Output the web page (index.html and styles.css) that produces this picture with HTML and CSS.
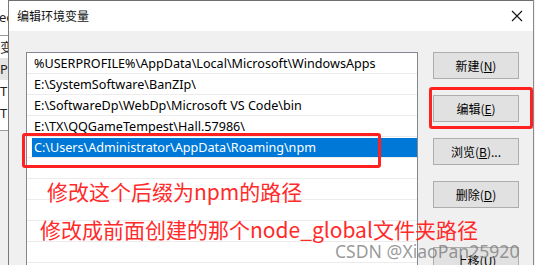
FILE: index.html
```html
<!DOCTYPE html>
<html lang="zh-CN">
<head>
<meta charset="utf-8">
<title>编辑环境变量</title>
<link rel="stylesheet" href="styles.css">
</head>
<body>
<div class="screen">
  <div class="behind">
    <div class="behind-top">ee</div>
    <div class="behind-row">变</div>
    <div class="behind-row sel">Pa</div>
    <div class="behind-row">TE</div>
    <div class="behind-row">TM</div>
    <div class="behind-bottom"></div>
  </div>
  <div class="dialog">
    <div class="titlebar">
      <span class="title">编辑环境变量</span>
      <svg class="close" width="12" height="12" viewBox="0 0 12 12"><path d="M1 1L11 11M11 1L1 11" stroke="#111" stroke-width="1.1" fill="none"/></svg>
    </div>
    <div class="content">
      <div class="listbox">
        <div class="row">%USERPROFILE%\AppData\Local\Microsoft\WindowsApps</div>
        <div class="row">E:\SystemSoftware\BanZIp\</div>
        <div class="row">E:\SoftwareDp\WebDp\Microsoft VS Code\bin</div>
        <div class="row">E:\TX\QQGameTempest\Hall.57986\</div>
        <div class="row editing"><span class="edit">C:\Users\Administrator\AppData\Roaming\npm</span></div>
        <div class="row"></div>
        <div class="row"></div>
        <div class="row"></div>
        <div class="row"></div>
        <div class="row"></div>
      </div>
      <div class="buttons">
        <div class="btn">新建(<u>N</u>)</div>
        <div class="btn">编辑(<u>E</u>)</div>
        <div class="btn">浏览(<u>B</u>)...</div>
        <div class="btn">删除(<u>D</u>)</div>
        <div class="btn gap">上移(<u>U</u>)</div>
      </div>
    </div>
  </div>
  <div class="edge"></div>

  <div class="mark mark-row"></div>
  <div class="mark mark-btn"></div>
  <div class="note note1">修改这个后缀为npm的路径</div>
  <div class="note note2">修改成前面创建的那个node_global文件夹路径</div>
  <div class="watermark">CSDN @XiaoPan25920</div>
</div>
</body>
</html>
```
FILE: styles.css
```css
html, body {
  margin: 0;
  padding: 0;
}
body {
  width: 535px;
  height: 265px;
  overflow: hidden;
  background: #f0f0f0;
  font-family: "Noto Sans", "Noto Sans CJK SC", sans-serif;
}
.screen {
  position: relative;
  display: flex;
  width: 535px;
  height: 265px;
  overflow: hidden;
}
.behind {
  width: 8px;
  flex: none;
  display: flex;
  flex-direction: column;
  overflow: hidden;
  background: #fff;
  font-size: 13px;
  color: #222;
  white-space: nowrap;
}
.behind-top {
  height: 35px;
  line-height: 34px;
  border-bottom: 1px solid #9a9a9a;
  text-indent: -1px;
}
.behind-row {
  height: 22px;
  line-height: 22px;
}
.behind-row.sel {
  background: #e5e5e5;
}
.behind-bottom {
  margin-top: 6px;
  border-top: 1px solid #9a9a9a;
  flex: 1;
  background: #f0f0f0;
}
.dialog {
  width: 525px;
  flex: none;
  display: flex;
  flex-direction: column;
  border-left: 1px solid #7a7a7a;
  border-top: 1px solid #6f6f6f;
  box-sizing: border-box;
  background: #f0f0f0;
}
.titlebar {
  height: 30px;
  flex: none;
  background: #fff;
  display: flex;
  align-items: center;
  justify-content: space-between;
  padding: 0 10px 0 8px;
}
.title {
  font-family: "Noto Sans CJK SC", sans-serif;
  font-size: 12px;
  color: #111;
  margin-top: -1px;
}
.close {
  display: block;
  margin-top: -1px;
}
.content {
  display: flex;
  padding: 21px 0 0 17px;
  gap: 15px;
}
.listbox {
  width: 392px;
  height: 240px;
  flex: none;
  background: #fff;
  border: 1px solid #828790;
  box-sizing: border-box;
}
.row {
  height: 21px;
  box-sizing: border-box;
  border-bottom: 1px solid #ececec;
  padding: 1px 0 0 7px;
  font-size: 12.6px;
  line-height: 20px;
  color: #000;
  white-space: nowrap;
  overflow: hidden;
}
.row.editing {
  padding: 1px 0 1px 5px;
  line-height: 19px;
}
.edit {
  display: block;
  height: 19px;
  background: #0078d7;
  color: #fff;
  padding-left: 2px;
}
.buttons {
  display: flex;
  flex-direction: column;
  gap: 16px;
}
.btn {
  width: 86px;
  height: 27px;
  box-sizing: border-box;
  background: #e1e1e1;
  border: 1px solid #adadad;
  display: flex;
  align-items: center;
  justify-content: center;
  font-family: "Noto Sans CJK SC", sans-serif;
  font-size: 12px;
  color: #000;
}
.btn u {
  text-underline-offset: 1px;
}
.btn.gap {
  margin-top: 23px;
}
.edge {
  flex: 1;
  background: #f0f0f0;
  border-left: 1px solid #8a8a8a;
}
.mark {
  position: absolute;
  border: 3px solid #ff2020;
  border-radius: 3px;
  box-sizing: border-box;
}
.mark-row {
  left: 22px;
  top: 133px;
  width: 359px;
  height: 35px;
}
.mark-btn {
  left: 429px;
  top: 87px;
  width: 104px;
  height: 42px;
}
.note {
  position: absolute;
  font-family: "Noto Sans CJK SC", sans-serif;
  font-size: 21px;
  line-height: 26px;
  color: #ff2a2a;
  white-space: nowrap;
}
.note1 {
  left: 47px;
  top: 178px;
}
.note2 {
  left: 40px;
  top: 216px;
}
.watermark {
  position: absolute;
  left: 335px;
  top: 240px;
  font-family: "Noto Sans", sans-serif;
  font-size: 17.6px;
  line-height: 22px;
  color: rgba(120, 120, 120, 0.75);
  white-space: nowrap;
}
```
